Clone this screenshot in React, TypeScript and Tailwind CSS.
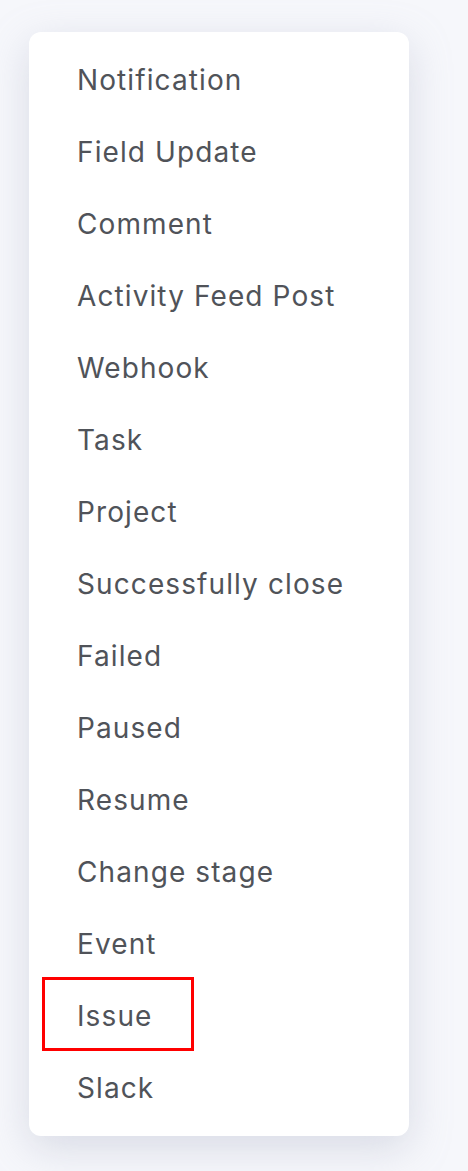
import React from "react";

const items = [
  "Notification",
  "Field Update",
  "Comment",
  "Activity Feed Post",
  "Webhook",
  "Task",
  "Project",
  "Successfully close",
  "Failed",
  "Paused",
  "Resume",
  "Change stage",
  "Event",
  "Issue",
  "Slack",
];

export default function App() {
  return (
    <div
      className="min-h-[1171px] w-[468px] bg-[#f6f7fb] pt-[32px] pl-[29px]"
      style={{ fontFamily: "Inter, 'Noto Sans', sans-serif" }}
    >
      <div className="relative w-[380px] rounded-[12px] bg-white py-[12px] shadow-[0_12px_40px_rgba(160,166,190,0.35)]">
        {items.map((t) => (
          <div
            key={t}
            className="flex h-[72px] items-center pl-[48px] text-[28px] tracking-[1.1px] text-[#505359]"
          >
            {t}
          </div>
        ))}
        <div className="pointer-events-none absolute left-[13px] top-[945px] h-[74px] w-[152px] border-[3px] border-[#ff0000]" />
      </div>
    </div>
  );
}
